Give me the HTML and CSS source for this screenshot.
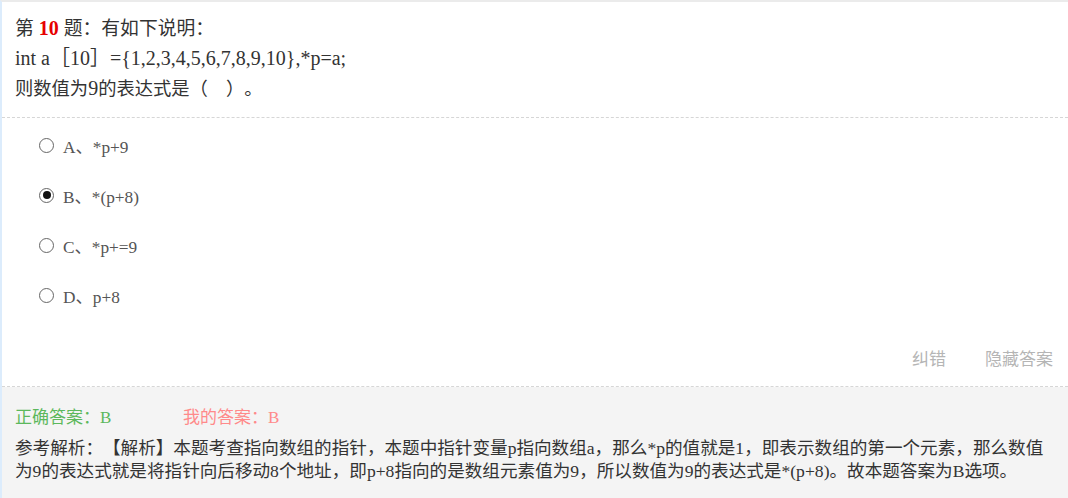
FILE: index.html
```html
<!DOCTYPE html>
<html lang="zh-CN">
<head>
<meta charset="utf-8">
<title>第10题</title>
<link rel="stylesheet" href="styles.css">
</head>
<body>
<div class="page">
  <section class="question">
    <div class="stem stem-head">第<span class="en"> <span class="num">10</span> </span>题：有如下说明：</div>
    <div class="stem"><span class="en">int a［10］={1,2,3,4,5,6,7,8,9,10},*p=a;</span></div>
    <div class="stem">则数值为<span class="en">9</span>的表达式是（　）。</div>
  </section>
  <section class="options">
    <div class="option"><span class="radio"></span><span class="opt-text">A、*p+9</span></div>
    <div class="option"><span class="radio checked"></span><span class="opt-text">B、*(p+8)</span></div>
    <div class="option"><span class="radio"></span><span class="opt-text">C、*p+=9</span></div>
    <div class="option"><span class="radio"></span><span class="opt-text">D、p+8</span></div>
    <div class="actions"><span class="action">纠错</span><span class="action">隐藏答案</span></div>
  </section>
  <section class="answer">
    <div class="answer-row"><span class="correct">正确答案：B</span><span class="mine">我的答案：B</span></div>
    <div class="analysis">参考解析：【解析】本题考查指向数组的指针，本题中指针变量p指向数组a，那么*p的值就是1，即表示数组的第一个元素，那么数值为9的表达式就是将指针向后移动8个地址，即p+8指向的是数组元素值为9，所以数值为9的表达式是*(p+8)。故本题答案为B选项。</div>
  </section>
</div>
</body>
</html>
```

FILE: styles.css
```css
html, body {
  margin: 0;
  padding: 0;
  background: #fff;
}
body {
  font-family: "Liberation Serif", "Noto Sans CJK SC", serif;
  color: #333;
  text-spacing-trim: space-all;
}
.page {
  width: 1068px;
  height: 498px;
  box-sizing: border-box;
  border-top: 2px solid #ebebeb;
  border-left: 2px solid #dcecfc;
  overflow: hidden;
  display: flex;
  flex-direction: column;
}
.question {
  padding: 11px 15px 14px 13px;
  border-bottom: 1px dashed #d6d6d6;
}
.stem {
  font-size: 18.3px;
  line-height: 30px;
  height: 30px;
  color: #333;
  white-space: nowrap;
}
.stem-head {
  font-size: 18.8px;
}
.en {
  font-size: 20px;
}
.num {
  color: #e60000;
  font-weight: bold;
}
.options {
  padding: 2px 15px 14px 37px;
  border-bottom: 1px dashed #d6d6d6;
}
.option {
  height: 50px;
  display: flex;
  align-items: center;
  gap: 9px;
}
.radio {
  width: 15px;
  height: 15px;
  border: 1.3px solid #666;
  border-radius: 50%;
  box-sizing: border-box;
  display: flex;
  align-items: center;
  justify-content: center;
  flex: none;
}
.radio.checked::after {
  content: "";
  width: 8px;
  height: 8px;
  border-radius: 50%;
  background: #111;
}
.opt-text {
  font-size: 17.3px;
  color: #555;
}
.actions {
  margin-top: 22px;
  display: flex;
  justify-content: flex-end;
  gap: 39px;
  height: 30px;
  align-items: center;
}
.action {
  font-size: 17px;
  color: #b5b5b5;
}
.answer {
  flex: 1;
  background: #f4f4f4;
  padding: 19px 12px 0 13px;
}
.answer-row {
  display: flex;
  font-size: 17px;
  line-height: 24px;
}
.correct {
  color: #5cb85c;
  width: 168px;
}
.mine {
  color: #ff8a8a;
}
.analysis {
  margin-top: 7px;
  font-size: 17.6px;
  line-height: 23px;
  color: #333;
}
```
